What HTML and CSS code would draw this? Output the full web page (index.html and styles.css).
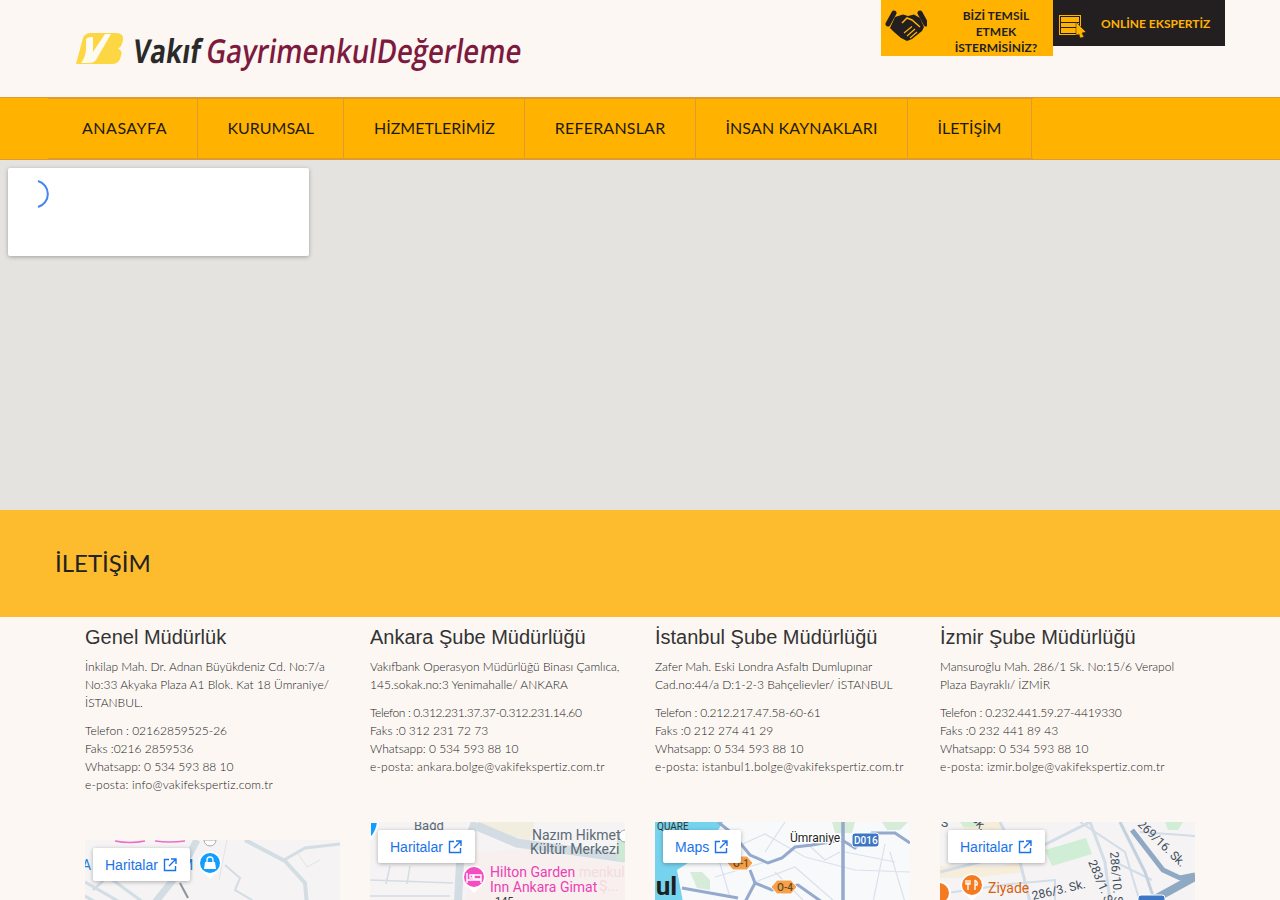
FILE: index.html
```html
<!DOCTYPE html>
<html lang="tr">
<head>
    <meta charset="utf-8">
    <meta name="viewport" content="width=device-width, initial-scale=1.0">
    <title>İletişim - Vakıf Gayrimenkul Değerleme</title>
    <link rel="stylesheet" href="styles.css">
</head>

<body>
    <div class="page">
        <header class="header">
            <a class="logo" href="#">
                <svg width="450" height="46" viewBox="0 0 450 46">
                    <path d="M1 34 L8 8 Q10 3 16 3 L41 3 Q49 3 48 10 L47 14 Q46 17 43 18.5 Q47 20 46.5 24 L45 29 Q43 34 37 34 Z" fill="#fdd644"/>
                    <path d="M11 9 Q13 7 16 7 L18 7 L18 22 L30 4 L36 4 L21 30 Q19 33 14 33 L6 33 Q10 28 11 20 Z" fill="#fdfaf0"/>
                    <text class="logo-dark" transform="translate(57 33) skewX(-8)" font-size="33" textLength="67" lengthAdjust="spacingAndGlyphs">Vakıf</text>
                    <text class="logo-red" transform="translate(130 33) skewX(-8)" font-size="33" textLength="315" lengthAdjust="spacingAndGlyphs">GayrimenkulDeğerleme</text>
                </svg>
            </a>
            <div class="top-links">
                <a class="top-btn top-btn-yellow" href="#">
                    <svg width="46" height="56" viewBox="0 0 46 56">
                        <path d="M7 24 L13 13 M39 13 L45 24" stroke="#231f20" stroke-width="5" stroke-linecap="round"/>
                        <path d="M14 17 L22 14.5 L27 16 L33 14.5 L39 18 L43 27 L41 31 L31 39 L26 41 L20 38 L13 32 L9 28 Z" fill="#231f20"/>
                        <path d="M21 23 L26 18 L31 20 L39 27" stroke="#ffb300" stroke-width="1.5" fill="none"/>
                        <path d="M26 36 L34 29 M23 33 L31 26.5 M29 38 L36 32" stroke="#ffb300" stroke-width="1.2"/>
                    </svg>
                    <span class="top-btn-text">BİZİ TEMSİL<br>ETMEK<br>İSTERMİSİNİZ?</span>
                </a>
                <a class="top-btn top-btn-dark" href="#">
                    <svg width="30" height="46" viewBox="0 0 30 46">
                        <rect x="1.5" y="15.5" width="21" height="19" fill="none" stroke="#ffb300"/>
                        <rect x="3" y="17" width="18" height="16" fill="#ffb300"/>
                        <path d="M3 22.5 H21 M3 27.5 H21" stroke="#231f20"/>
                        <path d="M18 22 L28 32 L24 33 L26 37 L22 38 L21 34 L18 35 Z" fill="#ffb300" stroke="#231f20" stroke-width="0.5"/>
                    </svg>
                    <span>ONLİNE EKSPERTİZ</span>
                </a>
            </div>
        </header>

        <nav class="nav">
            <ul class="nav-list">
                <li><a href="#">ANASAYFA</a></li>
                <li><a href="#">KURUMSAL</a></li>
                <li><a href="#">HİZMETLERİMİZ</a></li>
                <li><a href="#">REFERANSLAR</a></li>
                <li><a href="#">İNSAN KAYNAKLARI</a></li>
                <li><a href="#">İLETİŞİM</a></li>
            </ul>
        </nav>

        <section class="big-map">
            <div class="map-card">
                <svg class="spinner" width="44" height="34" viewBox="0 0 44 34">
                    <path d="M21 4 A13.5 13.5 0 0 1 21 30" fill="none" stroke="#4285f4" stroke-width="2"/>
                </svg>
            </div>
        </section>

        <section class="contact-band">
            <h2>İLETİŞİM</h2>
        </section>

        <section class="offices">
            <div class="office">
                <h3>Genel Müdürlük</h3>
                <p>İnkilap Mah. Dr. Adnan Büyükdeniz Cd. No:7/a No:33 Akyaka Plaza A1 Blok. Kat 18 Ümraniye/ İSTANBUL.</p>
                <p>Telefon : 02162859525-26<br>Faks :0216 2859536<br>Whatsapp: 0 534 593 88 10<br><span class="mail">e-posta: info@vakifekspertiz.com.tr</span></p>
                <div class="mini-map">
                    <svg width="255" height="80" viewBox="0 0 255 80">
                        <g fill="none" stroke="#d3dde4">
                            <path d="M160 0 L200 21 L220 43 L222 65" stroke-width="4"/>
                            <path d="M199 20 L220 8 L255 4" stroke-width="3"/>
                            <path d="M112 0 L96 30 L68 65" stroke-width="7"/>
                            <path d="M0 42 L40 65 M0 56 L16 65 M14 30 L62 65 M30 30 L8 50" stroke-width="3"/>
                            <path d="M140 25 L155 38 L150 50 L167 60 L167 70" stroke-width="2"/>
                            <path d="M142 0 L134 40 M212 12 L222 27 L235 20" stroke-width="1" stroke="#e1e4e6"/>
                        </g>
                        <path d="M30 1 Q45 4 60 1 M70 1 Q85 3 100 1" stroke="#f06ccb" stroke-width="1.5" fill="none"/>
                        <path d="M95 43 L103 58" stroke="#8a959c" stroke-width="2"/>
                        <text class="map-poi-blue" x="-3" y="30">A</text>
                        <text class="map-poi-blue" x="96" y="30">M</text>
                        <circle cx="125" cy="23" r="11.5" fill="#fff"/>
                        <path d="M117 31 L125 39 L133 31 Z" fill="#fff"/>
                        <circle cx="125" cy="23" r="10" fill="#129eff"/>
                        <path d="M120 22 H130 L131 29 H119 Z" fill="#fff"/>
                        <path d="M122 22 V20 A3 3 0 0 1 128 20 V22" fill="none" stroke="#fff" stroke-width="1.3"/>
                        <path d="M119 0 A6 6 0 0 0 131 0 Z" fill="#fff" stroke="#aaa"/>
                    </svg>
                    <a class="map-link" href="#">Haritalar
                        <svg width="14" height="14" viewBox="0 0 14 14"><path d="M6 1.5 H1.5 V12.5 H12.5 V8 M8 1 H13 V6 M13 1 L6 8" fill="none" stroke="#1a73e8" stroke-width="1.4"/></svg>
                    </a>
                </div>
            </div>

            <div class="office">
                <h3>Ankara Şube Müdürlüğü</h3>
                <p>Vakıfbank Operasyon Müdürlüğü Binası Çamlıca, 145.sokak.no:3 Yenimahalle/ ANKARA</p>
                <p><span class="tel-tight">Telefon : 0.312.231.37.37-0.312.231.14.60</span><br>Faks :0 312 231 72 73<br>Whatsapp: 0 534 593 88 10<br><span class="mail">e-posta: ankara.bolge@vakifekspertiz.com.tr</span></p>
                <div class="mini-map">
                    <svg width="255" height="80" viewBox="0 0 255 80">
                        <path d="M107 0 H165 L160 18 L112 8 Z" fill="#f2eedf"/>
                        <path d="M96 80 L100 32 L150 27 L255 42 V80 Z" fill="#f8efef"/>
                        <g fill="none" stroke="#d4dce3">
                            <path d="M107 4 L147 21 L255 36" stroke-width="9"/>
                            <path d="M105 0 L90 41 L88 80" stroke-width="8"/>
                            <path d="M0 58 L83 61 M20 44 L16 62 M40 44 L37 62 M0 74 H80" stroke-width="1.5"/>
                        </g>
                        <path d="M247 18 H255 V40 L247 38 Z" fill="#cfe8d4"/>
                        <circle cx="255" cy="14" r="6" fill="#fff" stroke="#9aa5ae"/>
                        <path d="M0 0 H8 Q7 10 0 17 Z" fill="#129eff" stroke="#fff" stroke-width="2"/>
                        <text class="map-label" x="44" y="8" font-size="13">Bağd</text>
                        <text class="map-label" x="162" y="18" font-size="14">Nazım Hikmet</text>
                        <text class="map-label" x="160" y="32" font-size="14">Kültür Merkezi</text>
                        <text class="map-faded" x="209" y="55">menkul</text>
                        <text class="map-faded" x="229" y="69">Ş...</text>
                        <text class="map-label-dark" x="125" y="83" font-size="11">145</text>
                        <circle cx="104" cy="55" r="11.5" fill="#fff"/>
                        <path d="M96 63 L104 71 L112 63 Z" fill="#fff"/>
                        <circle cx="104" cy="55" r="10" fill="#f44fc1"/>
                        <path d="M97 51 V61 M97 58 H111 V61 M100 53 H103 V56 H100 Z M104 53 H111 V57 H104 Z" stroke="#fff" stroke-width="1.4" fill="none"/>
                        <text class="map-poi-pink" x="120" y="55">Hilton Garden</text>
                        <text class="map-poi-pink" x="120" y="70">Inn Ankara Gimat</text>
                    </svg>
                    <a class="map-link" href="#">Haritalar
                        <svg width="14" height="14" viewBox="0 0 14 14"><path d="M6 1.5 H1.5 V12.5 H12.5 V8 M8 1 H13 V6 M13 1 L6 8" fill="none" stroke="#1a73e8" stroke-width="1.4"/></svg>
                    </a>
                </div>
            </div>

            <div class="office">
                <h3>İstanbul Şube Müdürlüğü</h3>
                <p>Zafer Mah. Eski Londra Asfaltı Dumlupınar Cad.no:44/a D:1-2-3 Bahçelievler/ İSTANBUL</p>
                <p><span class="tel">Telefon : 0.212.217.47.58-60-61</span><br>Faks :0 212 274 41 29<br>Whatsapp: 0 534 593 88 10<br><span class="mail">e-posta: istanbul1.bolge@vakifekspertiz.com.tr</span></p>
                <div class="mini-map map-light">
                    <svg width="255" height="80" viewBox="0 0 255 80">
                        <path d="M0 0 H68 L50 30 L22 48 L28 80 H0 Z" fill="#76d3ee"/>
                        <path d="M177 0 H200 L197 11 L180 11 Z M227 0 H253 L245 8 L232 8 Z M35 50 H47 L55 58 L55 68 L42 66 Z" fill="#d6ecd9"/>
                        <g fill="none" stroke="#d9e1ec" stroke-width="1.2">
                            <path d="M70 30 L110 12 L150 35 L200 48 L255 50 M100 60 L140 45 L180 80 M190 30 L240 40 M230 22 L218 80 M130 0 L110 30 M235 30 L250 80 M60 55 L110 40 M145 15 L170 38 L185 30 M120 50 L150 80 M60 25 L75 75"/>
                        </g>
                        <g fill="none" stroke="#94a9cd" stroke-width="3">
                            <path d="M188 0 V80" stroke-width="3.5"/>
                            <path d="M63 0 L77 11 L95 33 L113 41 L127 36 L140 25 L157 23 L187 18 L200 26 L217 11 L240 11 L255 21"/>
                            <path d="M95 48 L100 61 L117 68 L143 63 L167 80"/>
                            <path d="M100 61 L90 80"/>
                            <path d="M27 66 L83 76"/>
                        </g>
                        <text class="map-label-dark" x="2" y="8" font-size="10">QUARE</text>
                        <text class="map-halo" x="135" y="20" font-size="12">Ümraniye</text>
                        <text class="map-city" x="-14" y="73" font-size="26">bul</text>
                        <rect x="197" y="11" width="27" height="14" rx="3" fill="#3c76c4" stroke="#fff"/>
                        <text class="map-shield" x="199" y="22">D016</text>
                        <path d="M72 41 L78 34 H92 L98 41 L92 48 H78 Z" fill="#f6a14a" stroke="#fff"/>
                        <text class="map-shield-dark" x="78" y="45">O-1</text>
                        <path d="M116 65 L122 58 H136 L142 65 L136 72 H122 Z" fill="#f6a14a" stroke="#fff"/>
                        <text class="map-shield-dark" x="122" y="69">O-4</text>
                    </svg>
                    <a class="map-link" href="#">Maps
                        <svg width="14" height="14" viewBox="0 0 14 14"><path d="M6 1.5 H1.5 V12.5 H12.5 V8 M8 1 H13 V6 M13 1 L6 8" fill="none" stroke="#1a73e8" stroke-width="1.4"/></svg>
                    </a>
                </div>
            </div>

            <div class="office">
                <h3>İzmir Şube Müdürlüğü</h3>
                <p>Mansuroğlu Mah. 286/1 Sk. No:15/6 Verapol Plaza Bayraklı/ İZMİR</p>
                <p><span class="tel">Telefon : 0.232.441.59.27-4419330</span><br>Faks :0 232 441 89 43<br>Whatsapp: 0 534 593 88 10<br><span class="mail">e-posta: izmir.bolge@vakifekspertiz.com.tr</span></p>
                <div class="mini-map">
                    <svg width="255" height="80" viewBox="0 0 255 80">
                        <path d="M0 44 H60 L80 40 L85 50 L30 56 H0 Z M20 0 H62 L68 14 L28 16 Z" fill="#f6eedb"/>
                        <path d="M105 28 L146 16 L152 32 L112 44 Z M20 0 H40 L36 5 H24 Z M225 0 H243 L238 8 H228 Z" fill="#cfeed5"/>
                        <g fill="none" stroke="#d2dde8">
                            <path d="M60 0 L80 40 L90 80 M150 0 L165 40 L170 80 M0 50 L100 25 L130 10 L150 0" stroke-width="3"/>
                            <path d="M0 72 L70 62 L115 58 V80 M140 0 L185 30 L200 80 M200 10 L255 14 M175 40 L212 58" stroke-width="2"/>
                        </g>
                        <g fill="none" stroke="#8fa8c4">
                            <path d="M180 0 L205 50 L215 80" stroke-width="3" stroke="#c3d1df"/>
                            <path d="M192 8 L223 48 L240 56 L255 53" stroke-width="5"/>
                            <path d="M213 78 L255 55" stroke-width="8"/>
                        </g>
                        <g class="map-street">
                            <text transform="translate(197 3) rotate(44)" font-size="12">269/16. Sk.</text>
                            <text transform="translate(170 30) rotate(85)" font-size="12">286/10. Sk.</text>
                            <text transform="translate(148 40) rotate(67)" font-size="12">283/1. Sk.</text>
                            <text transform="translate(93 78) rotate(-13)" font-size="12">286/3. Sk.</text>
                            <text transform="translate(31 -3) rotate(50)" font-size="12">Sk.</text>
                            <text x="1" y="5" font-size="12">S</text>
                        </g>
                        <circle cx="32" cy="63" r="11.5" fill="#fff"/>
                        <path d="M24 71 L32 79 L40 71 Z" fill="#fff"/>
                        <circle cx="32" cy="63" r="10" fill="#f47b20"/>
                        <path d="M28 58 V68 M26 58 V62 H30 V58 M35 58 V68 M35 58 Q38 60 37 63 H35" stroke="#fff" stroke-width="1.3" fill="none"/>
                        <circle cx="-1" cy="71" r="11" fill="#f47b20" stroke="#fff" stroke-width="2"/>
                        <text class="map-poi-orange" x="48" y="71">Ziyade</text>
                        <rect x="198" y="73" width="27" height="14" rx="3" fill="#3c76c4" stroke="#fff"/>
                    </svg>
                    <a class="map-link" href="#">Haritalar
                        <svg width="14" height="14" viewBox="0 0 14 14"><path d="M6 1.5 H1.5 V12.5 H12.5 V8 M8 1 H13 V6 M13 1 L6 8" fill="none" stroke="#1a73e8" stroke-width="1.4"/></svg>
                    </a>
                </div>
            </div>
        </section>
    </div>
</body>
</html>
```

FILE: styles.css
```css
* {
    margin: 0;
    padding: 0;
    box-sizing: border-box;
}

:root {
    --yellow: #ffb300;
    --band: #fcbc2e;
    --dark: #231f20;
    --cream: #fcf7f3;
    --line: #df9a34;
}

body {
    background: var(--cream);
    font-family: "Lato", sans-serif;
    color: #222;
}

a {
    text-decoration: none;
    color: inherit;
}

.page {
    height: 900px;
    overflow: hidden;
}

.header {
    height: 97px;
    display: flex;
    justify-content: space-between;
    align-items: flex-start;
    padding: 0 55px 0 75px;
}

.logo {
    margin-top: 30px;
    display: block;
}

.logo text {
    font-family: "Open Sans", sans-serif;
}

.logo-dark {
    fill: #2a2a2a;
    font-weight: 700;
}

.logo-red {
    fill: #7d1a3e;
    font-weight: 600;
}

.top-links {
    display: flex;
    align-items: flex-start;
}

.top-btn {
    width: 172px;
    display: flex;
    align-items: center;
    font-size: 12px;
    font-weight: 700;
}

.top-btn-yellow {
    height: 56px;
    background: var(--yellow);
    color: var(--dark);
}

.top-btn-text {
    flex: 1;
    text-align: center;
    line-height: 16px;
    padding-top: 8px;
    padding-left: 12px;
}

.top-btn-dark {
    height: 46px;
    background: var(--dark);
    color: var(--yellow);
    gap: 13px;
    padding-left: 5px;
}

.nav {
    height: 63px;
    background: var(--yellow);
    border-top: 1px solid var(--line);
    border-bottom: 1px solid var(--line);
}

.nav-list {
    list-style: none;
    display: flex;
    margin-left: 48px;
    width: 985px;
    margin-top: -1px;
    height: 63px;
    border-top: 2px solid var(--line);
    border-bottom: 2px solid var(--line);
}

.nav-list li {
    flex-shrink: 0;
    white-space: nowrap;
    border-right: 1px solid var(--line);
    display: flex;
    align-items: center;
    padding: 0 29.5px 2px;
    font-size: 16px;
    color: #1d1a14;
}

.nav-list li:nth-child(1) {
    padding-left: 34px;
    padding-right: 30px;
    letter-spacing: 0.5px;
}

.nav-list li:nth-child(4) {
    letter-spacing: 0.2px;
}

.nav-list li:nth-child(5) {
    letter-spacing: 0.15px;
}

.big-map {
    height: 350px;
    background: #e5e3df;
    padding: 8px;
}

.map-card {
    width: 301px;
    height: 88px;
    background: #fff;
    border-radius: 2px;
    box-shadow: 0 1px 4px rgba(0, 0, 0, 0.3);
    padding-top: 9px;
    padding-left: 9px;
}

.spinner {
    display: block;
}

.contact-band {
    height: 107px;
    background: var(--band);
    padding: 36px 55px 0;
}

.contact-band h2 {
    font-size: 24px;
    font-weight: 400;
    line-height: 33px;
    color: #222;
}

.offices {
    display: grid;
    grid-template-columns: repeat(4, 255px);
    column-gap: 30px;
    padding: 9px 85px 0;
    align-items: start;
}

.office h3 {
    font-family: "Liberation Sans", sans-serif;
    font-size: 20px;
    font-weight: 400;
    line-height: 22px;
    color: #333;
    margin-bottom: 10px;
}

.office p {
    font-size: 12px;
    font-weight: 300;
    line-height: 18px;
    color: #222;
    margin-bottom: 10px;
}

.mail {
    letter-spacing: 0.2px;
}

.tel {
    letter-spacing: -0.2px;
}

.tel-tight {
    letter-spacing: -0.38px;
}

.mini-map {
    position: relative;
    margin-top: 46px;
    height: 80px;
    background: #f5f3f3;
    overflow: hidden;
}

.map-light {
    background: #f8f9fb;
}

.mini-map > svg {
    display: block;
}

.map-link {
    position: absolute;
    top: 8px;
    left: 8px;
    height: 33px;
    display: flex;
    align-items: center;
    gap: 5px;
    padding: 0 13px 0 12px;
    background: #fff;
    border-radius: 2px;
    box-shadow: 0 1px 4px rgba(0, 0, 0, 0.3);
    font-family: "Liberation Sans", sans-serif;
    font-size: 14px;
    color: #1a73e8;
}

.mini-map text {
    font-family: "Roboto", sans-serif;
}

.map-poi-blue {
    fill: #1a7fe0;
    font-size: 14px;
}

.map-poi-pink {
    fill: #ec3fb4;
    font-size: 14px;
}

.map-poi-orange {
    fill: #d8600f;
    font-size: 14px;
}

.map-faded {
    fill: #f3dcdc;
    font-size: 14px;
}

.map-label {
    fill: #5b6b77;
}

.map-label-dark {
    fill: #333;
}

.map-halo {
    fill: #222;
    stroke: #fff;
    stroke-width: 2.5;
    paint-order: stroke;
}

.map-city {
    fill: #1f1f1f;
    font-weight: 700;
}

.map-shield {
    fill: #fff;
    font-size: 10px;
    font-weight: 500;
}

.map-shield-dark {
    fill: #6a4a1e;
    font-size: 10px;
    font-weight: 500;
}

.map-street {
    fill: #3f4d5c;
}
```
